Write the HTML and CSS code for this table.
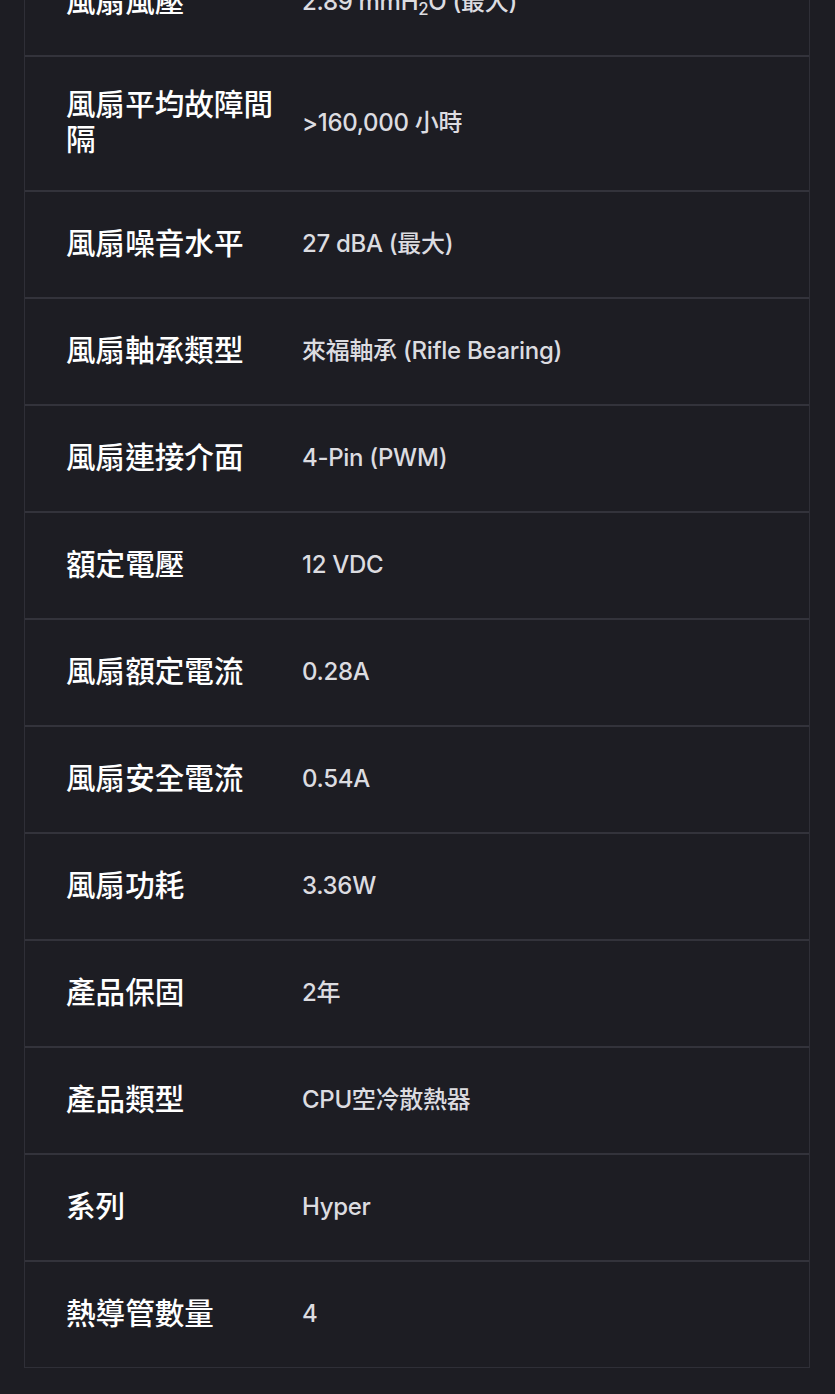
FILE: index.html
```html
<!DOCTYPE html>
<html lang="zh-Hant">
<head>
<meta charset="utf-8">
<title>規格</title>
<link rel="stylesheet" href="styles.css">
</head>
<body>
<div class="specs">
  <div class="row"><div class="label">風扇風壓</div><div class="value">2.89 mmH<sub>2</sub>O (最大)</div></div>
  <div class="row"><div class="label">風扇平均故障間隔</div><div class="value">&gt;160,000 小時</div></div>
  <div class="row"><div class="label">風扇噪音水平</div><div class="value">27 dBA (最大)</div></div>
  <div class="row"><div class="label">風扇軸承類型</div><div class="value">來福軸承 (Rifle Bearing)</div></div>
  <div class="row"><div class="label">風扇連接介面</div><div class="value">4-Pin (PWM)</div></div>
  <div class="row"><div class="label">額定電壓</div><div class="value">12 VDC</div></div>
  <div class="row"><div class="label">風扇額定電流</div><div class="value">0.28A</div></div>
  <div class="row"><div class="label">風扇安全電流</div><div class="value">0.54A</div></div>
  <div class="row"><div class="label">風扇功耗</div><div class="value">3.36W</div></div>
  <div class="row"><div class="label">產品保固</div><div class="value">2年</div></div>
  <div class="row"><div class="label">產品類型</div><div class="value">CPU空冷散熱器</div></div>
  <div class="row"><div class="label">系列</div><div class="value">Hyper</div></div>
  <div class="row"><div class="label">熱導管數量</div><div class="value">4</div></div>
</div>
</body>
</html>
```
FILE: styles.css
```css
html, body {
  margin: 0;
  padding: 0;
  background: #1d1d23;
}
body {
  font-family: Inter, "Noto Sans CJK TC", sans-serif;
  color: #ffffff;
}
.specs {
  margin: -51px 0 0 24px;
  width: 786px;
  box-sizing: border-box;
  border: 1px solid #2f2f37;
  background: #1d1d23;
}
.row {
  display: grid;
  grid-template-columns: 210px 1fr;
  column-gap: 26px;
  align-items: center;
  padding: 31px 20px 32px 41px;
  border-bottom: 2px solid #33333b;
}
.row:last-child {
  border-bottom: none;
}
.label {
  font-family: "Noto Sans CJK TC", sans-serif;
  font-weight: 500;
  font-size: 29.6px;
  line-height: 35px;
  color: #ffffff;
  margin-top: -3px;
  margin-bottom: 3px;
}
.value {
  font-family: Inter, "Noto Sans CJK TC", sans-serif;
  font-weight: 500;
  font-size: 24px;
  line-height: 42px;
  letter-spacing: -0.3px;
  color: #dcdce0;
}
.value sub {
  font-size: 0.7em;
  line-height: 0;
  vertical-align: -0.3em;
}
```
